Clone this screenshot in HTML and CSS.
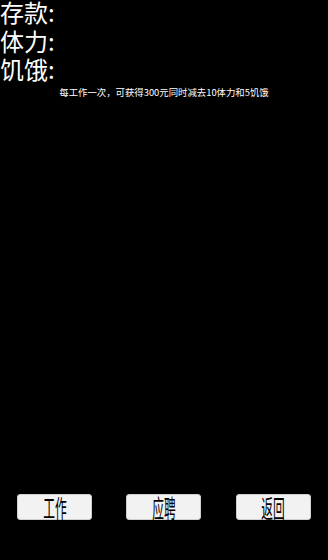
FILE: index.html
```html
<!DOCTYPE html>
<html lang="zh">
<head>
<meta charset="utf-8">
<link rel="stylesheet" href="styles.css">
</head>
<body>
<div class="screen">
  <div class="stats">
    <div class="stat">存款:</div>
    <div class="stat">体力:</div>
    <div class="stat">饥饿:</div>
  </div>
  <p class="hint">每工作一次，可获得300元同时减去10体力和5饥饿</p>
  <div class="spacer"></div>
  <div class="actions">
    <button class="btn"><span class="btn-label">工作</span></button>
    <button class="btn"><span class="btn-label">应聘</span></button>
    <button class="btn"><span class="btn-label">返回</span></button>
  </div>
</div>
</body>
</html>
```
FILE: styles.css
```css
html, body {
  margin: 0;
  padding: 0;
  background: #000;
}
body {
  font-family: "Noto Sans CJK SC", "Noto Sans", sans-serif;
  color: #fff;
}
.screen {
  width: 328px;
  height: 560px;
  display: flex;
  flex-direction: column;
  overflow: hidden;
}
.stats {
  display: flex;
  flex-direction: column;
  gap: 4.5px;
}
.stat {
  font-size: 24px;
  line-height: 24px;
}
.hint {
  margin: 5px 0 0;
  font-size: 9.4px;
  line-height: 12px;
  text-align: center;
  color: #fff;
}
.spacer {
  flex: 1;
}
.actions {
  display: grid;
  grid-template-columns: repeat(3, 1fr);
  justify-items: center;
  padding-bottom: 40px;
}
.btn {
  width: 75px;
  height: 26px;
  margin: 0;
  padding: 0;
  background: #f2f2f2;
  border: 1px solid #cfcfcf;
  border-radius: 3px;
  display: flex;
  align-items: center;
  justify-content: center;
  overflow: visible;
  font-family: "Noto Sans CJK SC", sans-serif;
  color: #000;
}
.btn-label {
  display: inline-block;
  font-size: 25px;
  line-height: 26px;
  transform: scaleX(0.47);
  white-space: nowrap;
}
```
